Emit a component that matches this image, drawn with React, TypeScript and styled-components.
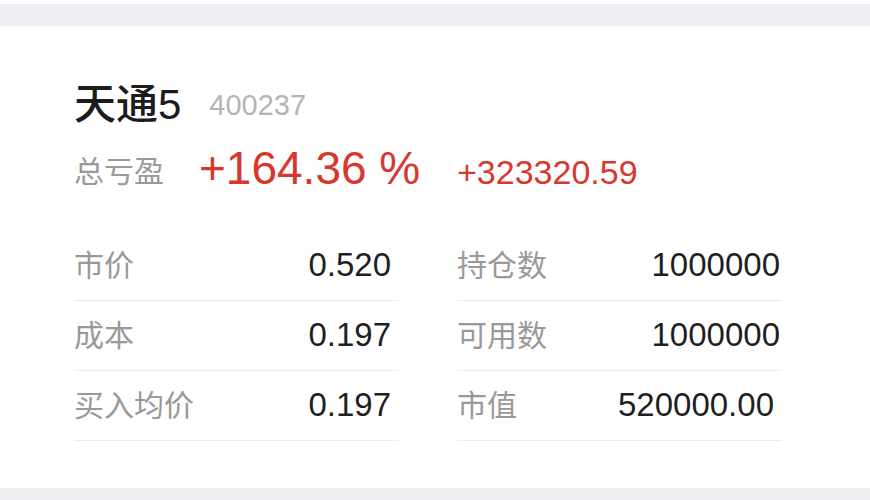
import styled, { createGlobalStyle } from "styled-components";

const GlobalStyle = createGlobalStyle`
  body {
    margin: 0;
    background: #ffffff;
    font-family: "Liberation Sans", "Noto Sans CJK SC", sans-serif;
  }
`;

const Band = styled.div<{ $top?: boolean }>`
  height: ${(p) => (p.$top ? "22px" : "12px")};
  margin-top: ${(p) => (p.$top ? "4px" : "0")};
  background: #efeff3;
`;

const Card = styled.section`
  padding: 55px 88px 47px 74px;
  background: #fff;
`;

const Header = styled.div`
  display: flex;
  align-items: center;
  height: 48px;
`;

const Name = styled.h1`
  margin: 0;
  font-size: 42px;
  line-height: 48px;
  font-weight: 500;
  color: #1c1c1c;
  white-space: nowrap;
`;

const Code = styled.span`
  margin-left: 28px;
  font-size: 29px;
  color: #b4b4b4;
`;

const Summary = styled.div`
  display: grid;
  grid-template-columns: 325px 325px;
  column-gap: 58px;
  align-items: baseline;
  margin-top: 11px;
  height: 56px;
  white-space: nowrap;
`;

const SummaryLeft = styled.div`
  display: flex;
  align-items: baseline;
`;

const SummaryLabel = styled.span`
  font-family: "Noto Sans CJK SC", sans-serif;
  font-size: 30px;
  color: #9a9a9a;
  position: relative;
  top: -2px;
`;

const Percent = styled.span`
  margin-left: 35px;
  font-size: 46px;
  line-height: 56px;
  color: #d8372e;
`;

const Amount = styled.span`
  font-size: 34px;
  color: #d8372e;
`;

const Table = styled.div`
  display: grid;
  grid-template-columns: 325px 325px;
  column-gap: 58px;
  margin-top: 35px;
`;

const Row = styled.div`
  display: flex;
  align-items: center;
  justify-content: space-between;
  height: 69px;
  border-bottom: 1px solid #ececec;
  white-space: nowrap;
`;

const Label = styled.span`
  font-family: "Noto Sans CJK SC", sans-serif;
  font-size: 30px;
  line-height: 40px;
  padding-bottom: 6px;
  color: #999999;
`;

const Value = styled.span<{ $pad: number }>`
  font-size: 33px;
  line-height: 40px;
  padding-bottom: 2px;
  color: #1f1f1f;
  padding-right: ${(p) => p.$pad}px;
`;

const cells = [
  { label: "市价", value: "0.520", pad: 8 },
  { label: "持仓数", value: "1000000", pad: 2 },
  { label: "成本", value: "0.197", pad: 8 },
  { label: "可用数", value: "1000000", pad: 2 },
  { label: "买入均价", value: "0.197", pad: 8 },
  { label: "市值", value: "520000.00", pad: 8 },
];

export default function App() {
  return (
    <>
      <GlobalStyle />
      <Band $top />
      <Card>
        <Header>
          <Name>天通5</Name>
          <Code>400237</Code>
        </Header>
        <Summary>
          <SummaryLeft>
            <SummaryLabel>总亏盈</SummaryLabel>
            <Percent>+164.36 %</Percent>
          </SummaryLeft>
          <Amount>+323320.59</Amount>
        </Summary>
        <Table>
          {cells.map((c) => (
            <Row key={c.label}>
              <Label>{c.label}</Label>
              <Value $pad={c.pad}>{c.value}</Value>
            </Row>
          ))}
        </Table>
      </Card>
      <Band />
    </>
  );
}
